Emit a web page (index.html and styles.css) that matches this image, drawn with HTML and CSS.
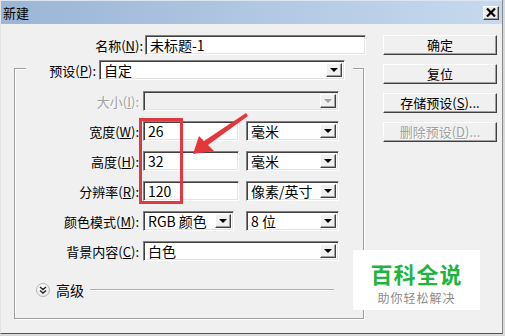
FILE: index.html
```html
<!DOCTYPE html>
<html lang="zh-CN">
<head>
    <meta charset="UTF-8">
    <meta name="viewport" content="width=device-width, initial-scale=1.0">
    <title>新建</title>
    <link rel="stylesheet" href="styles.css">
</head>
<body>
    <div class="window">
        <div class="titlebar">
            <span class="title">新建</span>
            <span class="close">
                <svg width="10" height="9" viewBox="0 0 10 9"><path d="M1 0.5 L9 8.5 M9 0.5 L1 8.5" stroke="#000" stroke-width="2.2" fill="none"/></svg>
            </span>
        </div>

        <div class="main">
            <div class="form">
                <div class="name-row">
                    <span class="name-label">名称(<u>N</u>):</span>
                    <div class="field name-field">未标题-1</div>
                </div>

                <div class="group">
                    <div class="group-head">
                        <span class="head-label">预设(<u>P</u>):</span>
                        <div class="field select preset">自定<span class="arrow"></span></div>
                    </div>

                    <div class="row first">
                        <span class="lbl disabled">大小(<u>I</u>):</span>
                        <div class="field select wide off"><span class="arrow"></span></div>
                    </div>
                    <div class="row">
                        <span class="lbl">宽度(<u>W</u>):</span>
                        <div class="field num">26</div>
                        <div class="field select unit">毫米<span class="arrow"></span></div>
                    </div>
                    <div class="row">
                        <span class="lbl">高度(<u>H</u>):</span>
                        <div class="field num">32</div>
                        <div class="field select unit">毫米<span class="arrow"></span></div>
                    </div>
                    <div class="row">
                        <span class="lbl">分辨率(<u>R</u>):</span>
                        <div class="field num">120</div>
                        <div class="field select unit">像素/英寸<span class="arrow"></span></div>
                    </div>
                    <div class="row">
                        <span class="lbl">颜色模式(<u>M</u>):</span>
                        <div class="field select mode">RGB 颜色<span class="arrow"></span></div>
                        <div class="field select unit bits">8 位<span class="arrow"></span></div>
                    </div>
                    <div class="row">
                        <span class="lbl">背景内容(<u>C</u>):</span>
                        <div class="field select wide">白色<span class="arrow"></span></div>
                    </div>

                    <div class="advanced">
                        <span class="toggle">
                            <svg width="8" height="8" viewBox="0 0 8 8"><path d="M1 1 L4 3.5 L7 1 M1 4.5 L4 7 L7 4.5" stroke="#222" stroke-width="1.4" fill="none"/></svg>
                        </span>
                        <span class="adv-text">高级</span>
                        <span class="adv-line"></span>
                    </div>
                </div>
            </div>

            <div class="side">
                <button class="btn">确定</button>
                <button class="btn">复位</button>
                <button class="btn">存储预设(<u>S</u>)...</button>
                <button class="btn disabled">删除预设(<u>D</u>)...</button>
            </div>
        </div>

        <!-- annotation drawn over the screenshot -->
        <div class="mark"></div>
        <svg class="pointer" width="505" height="336" viewBox="0 0 505 336">
            <polygon points="246,113 204,141 199,136 193,154 214,151 208,145 248,116" fill="#e4373c"/>
        </svg>

        <div class="stamp">
            <div class="stamp-title">百科全说</div>
            <div class="stamp-sub">助你轻松解决</div>
        </div>
    </div>
</body>
</html>
```

FILE: styles.css
```css
body {
    margin: 0;
    font-family: "Noto Sans CJK SC", "Liberation Sans", sans-serif;
    font-size: 13px;
    color: #000;
    background-color: #d9d9d9;
}

.window {
    position: relative;
    width: 503px;
    height: 334px;
    box-sizing: border-box;
    background-color: #f0f0f0;
    border-left: 1px solid #e4e4e4;
    border-right: 1px solid #8a8a8a;
    border-bottom: 1px solid #555;
    overflow: hidden;
}

.titlebar {
    height: 24px;
    display: flex;
    align-items: center;
    justify-content: space-between;
    padding: 0 3px 0 2px;
    background: linear-gradient(to right, #9bb5d6, #c6d9ee);
    border-top: 1px solid #dce6f2;
    box-sizing: border-box;
}

.title {
    font-size: 13px;
    line-height: 1;
}

.close {
    width: 16px;
    height: 14px;
    box-sizing: border-box;
    display: flex;
    align-items: center;
    justify-content: center;
    background-color: #ececec;
    border: 1px solid;
    border-color: #fff #404040 #404040 #fff;
    box-shadow: inset -1px -1px 0 #a0a0a0;
}

.main {
    display: flex;
    padding-top: 11px;
}

.form {
    width: 370px;
}

.name-row {
    display: flex;
    align-items: center;
    height: 20px;
}

.name-label {
    width: 142px;
    text-align: right;
    margin-right: 2px;
}

.field {
    height: 20px;
    box-sizing: border-box;
    background-color: #fff;
    border: 1px solid;
    border-color: #808080 #fff #fff #808080;
    box-shadow: inset 1px 1px 0 #404040, inset -1px -1px 0 #e3e3e3;
    padding: 0 4px;
    font-size: 14px;
    line-height: 18px;
    display: flex;
    align-items: center;
    position: relative;
}

.name-field {
    width: 221px;
}

.select {
    padding-right: 18px;
}

.arrow {
    position: absolute;
    top: 2px;
    right: 2px;
    width: 16px;
    height: 14px;
    box-sizing: border-box;
    background-color: #f0f0f0;
    border: 1px solid;
    border-color: #fff #404040 #404040 #fff;
    box-shadow: inset -1px -1px 0 #a0a0a0;
}

.arrow::after {
    content: "";
    position: absolute;
    left: 3px;
    top: 4px;
    border-left: 4px solid transparent;
    border-right: 4px solid transparent;
    border-top: 4px solid #000;
}

.off {
    background-color: #f0f0f0;
}

.off .arrow::after {
    border-top-color: #a0a0a0;
}

.group {
    margin: 13px 0 0 13px;
    width: 350px;
    box-sizing: border-box;
    border: 1px solid #a0a0a0;
    box-shadow: inset 1px 1px 0 #fff, 1px 1px 0 #fff;
    padding-bottom: 20px;
}

.group-head {
    display: flex;
    align-items: center;
    margin: -9px 10px 0 11px;
    background-color: #f0f0f0;
    height: 20px;
}

.head-label {
    width: 70px;
    text-align: right;
    margin-right: 3px;
}

.preset {
    width: 246px;
}

.row {
    display: flex;
    align-items: center;
    height: 20px;
    margin-top: 10px;
}

.row.first {
    margin-top: 11px;
}

.lbl {
    width: 124px;
    text-align: right;
    margin-right: 4px;
}

.disabled {
    color: #a0a0a0;
    text-shadow: 1px 1px 0 #fff;
}

.wide {
    width: 196px;
}

.num {
    width: 96px;
}

.unit {
    width: 93px;
    margin-left: 7px;
}

.mode {
    width: 91px;
}

.bits {
    margin-left: 12px;
}

.advanced {
    display: flex;
    align-items: center;
    height: 16px;
    margin-top: 21px;
}

.toggle {
    width: 14px;
    height: 14px;
    margin-left: 21px;
    border-radius: 50%;
    box-sizing: border-box;
    border: 1px solid #b5b5b5;
    background: radial-gradient(circle at 40% 35%, #fff, #e2e2e2);
    display: flex;
    align-items: center;
    justify-content: center;
}

.adv-text {
    margin-left: 6px;
    font-size: 14px;
}

.adv-line {
    flex: 1;
    height: 0;
    margin: 0 29px 0 6px;
    border-top: 1px solid #b0b0b0;
    border-bottom: 1px solid #fff;
}

.side {
    margin-left: 12px;
    display: flex;
    flex-direction: column;
}

.btn {
    width: 114px;
    height: 20px;
    margin-bottom: 9px;
    padding: 0;
    font-family: inherit;
    font-size: 13px;
    line-height: 18px;
    color: #000;
    background-color: #f0f0f0;
    border: 1px solid;
    border-color: #fff #404040 #404040 #fff;
    box-shadow: inset -1px -1px 0 #a0a0a0;
}

.btn.disabled {
    color: #a0a0a0;
}

.mark {
    position: absolute;
    left: 138px;
    top: 118px;
    width: 44px;
    height: 86px;
    box-sizing: border-box;
    border: 3px solid #e0393f;
}

.pointer {
    position: absolute;
    left: -1px;
    top: 0;
}

.stamp {
    position: absolute;
    left: 352px;
    top: 250px;
    width: 127px;
    height: 60px;
    background-color: #fff;
    text-align: center;
}

.stamp-title {
    margin-top: 7px;
    font-size: 22px;
    font-weight: bold;
    line-height: 32px;
    color: #1fb53d;
    letter-spacing: 1px;
}

.stamp-sub {
    font-size: 12px;
    line-height: 17px;
    color: #8a8a8a;
    letter-spacing: 1px;
}
```
